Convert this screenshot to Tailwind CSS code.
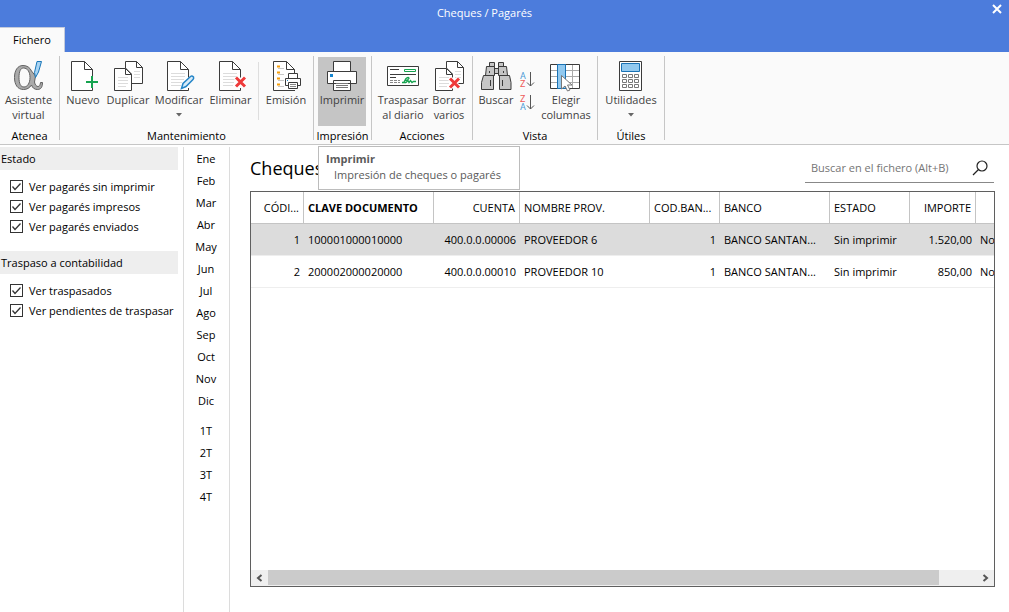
<!DOCTYPE html>
<html lang="es">
<head>
<meta charset="utf-8">
<title>Cheques / Pagarés</title>
<script src="https://cdn.jsdelivr.net/npm/@tailwindcss/browser@4"></script>
</head>
<body class="flex min-h-screen flex-col bg-white font-['Open_Sans','Noto_Sans',sans-serif] text-[11px] leading-[15px] text-black">

<svg class="hidden" aria-hidden="true">
  <defs>
    <g id="page" fill="none" stroke="#3b3b3b">
      <path fill="#fff" stroke="none" d="M4.500 1.500H17.500L25.500 9.500V30.500H4.500Z"/>
      <path d="M25.500 17.500V9.500L17.500 1.500H4.500V30.500H25.500V28M17.500 1.500V9.500H25.500"/>
    </g>
    <path id="lines" fill="none" stroke="#dcdcdc" d="M8 13.500H22M8 16.500H22M8 19.500H21M8 22.500H19M8 25.500H18"/>
    <g id="pages" fill="#fff" stroke="#3b3b3b">
      <path d="M13.500 8V1.500H24.500L30.500 7.500V23.500H19.500V14Z"/>
      <path fill="none" d="M24.500 1.500V7.500H30.500"/>
      <path stroke="#dcdcdc" d="M22 11.500H28M22 14.500H28M22 17.500H28"/>
      <path d="M2.500 8.500H13.500L19.500 14.500V30.500H2.500Z"/>
      <path fill="none" d="M13.500 8.500V14.500H19.500"/>
      <path stroke="#dcdcdc" d="M6 17.500H16M6 20.500H16M6 23.500H16M6 26.500H14"/>
    </g>
  </defs>
</svg>

<header class="bg-[#4c7cdc]">
  <div class="relative flex h-[27px] items-center justify-center pb-0.5 text-white">
    <h1 class="-translate-x-5">Cheques / Pagarés</h1>
    <button aria-label="Cerrar" class="absolute top-1 right-[7px] h-[10px] w-[10px]">
      <svg class="size-[10px]" viewBox="0 0 10 10" stroke="#fff" stroke-width="2"><path d="M1 1L9 9M9 1L1 9"/></svg>
    </button>
  </div>
  <button class="block h-[25px] w-[65px] border-t border-r border-[#c4cbdc] bg-[#fafafa] pb-0.5">Fichero</button>
</header>

<nav aria-label="Fichero" class="flex h-[93px] border-b border-[#c6c6c6] bg-[#fafafa] pt-1 whitespace-nowrap text-[#3f3f3f]">
  <section class="flex h-[84px] w-[60px] flex-col items-center justify-between border-r border-[#c6c6c6]">
    <button class="mr-0.5 flex w-[52px] flex-col items-center pt-1">
      <svg class="size-8" viewBox="0 0 32 32">
        <path d="M10 5.500C14 5.500 17 7.500 18.500 11L22.500 16L21.500 22C22 25 23.500 26.500 25 26.500C26.500 26.500 27.200 25 27.500 22.500H29.500C29.500 27 28 29.500 24.500 29.500C21.500 29.500 19.500 28 18.500 25C16.500 28 14 29.500 10.500 29.500C4.500 29.500 1.500 24.500 1.500 17.500C1.500 10.500 4.500 5.500 10 5.500ZM10.500 8C7.500 8 6 11.500 6 17.500C6 23.500 7.500 27 11 27C14.500 27 17 23 17 17.500C17 12 14.500 8 10.500 8Z" fill="#aaa" stroke="#626262" fill-rule="evenodd"/>
        <path d="M24 1.500H28.500L25.500 12L22.500 17.500L21.500 12.500Z" fill="#a9d4f3" stroke="#1976b8"/>
      </svg>
      <span>Asistente</span><span>virtual</span>
    </button>
    <h2 class="-mb-[3px] text-black">Atenea</h2>
  </section>

  <section class="flex h-[84px] w-[254px] flex-col items-center justify-between border-r border-[#c6c6c6]">
    <div class="flex w-full pl-px">
      <button class="flex w-[44px] flex-col items-center pt-1">
        <svg class="size-8" viewBox="0 0 32 32"><use href="#page"/><path d="M25 16V28M19 22H31" stroke="#16a34f" stroke-width="2"/></svg>
        <span>Nuevo</span>
      </button>
      <button class="flex w-[46px] flex-col items-center pt-1">
        <svg class="size-8" viewBox="0 0 32 32"><use href="#pages"/></svg>
        <span>Duplicar</span>
      </button>
      <button class="flex w-[56px] flex-col items-center pt-1">
        <svg class="size-8" viewBox="0 0 32 32"><use href="#page"/><use href="#lines"/><path d="M18.500 28.500L20 23.500L27.500 16.500Q29 15.500 30.500 17Q31 18.500 30 19.500L23 26.500Z" fill="#d8ebf8" stroke="#2485c7" stroke-width="1.500"/></svg>
        <span>Modificar</span>
        <svg class="mt-[6px] h-[4px] w-[6px]" viewBox="0 0 6 4"><path d="M0 0H6L3 3.500Z" fill="#666"/></svg>
      </button>
      <button class="flex w-[47px] flex-col items-center pt-1">
        <svg class="size-8" viewBox="0 0 32 32"><use href="#page"/><use href="#lines"/><path d="M21 17.500L30 26.500M30 17.500L21 26.500" stroke="#fff" stroke-width="5"/><path d="M21 17.500L30 26.500M30 17.500L21 26.500" stroke="#ee3a3a" stroke-width="3"/></svg>
        <span>Eliminar</span>
      </button>
      <div class="mx-1 mt-1.5 h-[58px] w-px bg-[#dedede]"></div>
      <button class="flex w-[46px] flex-col items-center pt-1">
        <svg class="size-8" viewBox="0 0 32 32">
          <path d="M3.500 1.500H16.500L24.500 9.500V30.500H3.500Z" fill="#fff"/>
          <path d="M24.500 13V9.500L16.500 1.500H3.500V30.500H25M16.500 1.500V9.500H24.500" fill="none" stroke="#3b3b3b"/>
          <path d="M7 6.500H10M7 12.500H10M7 18.500H10M7 24.500H10" stroke="#f59e0b" stroke-width="2"/>
          <path d="M8 8.500H14M8 14.500H14M8 20.500H14M8 26.500H14" stroke="#c8c8c8"/>
          <path d="M18.500 18.500V13.500H27.500V18.500M15.500 18.500H30.500V25.500H15.500Z" fill="#fff" stroke="#3b3b3b"/>
          <path d="M18.500 22.500H27.500V28.500H18.500Z" fill="#fff" stroke="#3b3b3b"/>
          <path d="M20 24.500H26M20 26.500H26" stroke="#888"/><path d="M17 20.500H18" stroke="#2485c7"/>
        </svg>
        <span>Emisión</span>
      </button>
    </div>
    <h2 class="-mb-[3px] text-black">Mantenimiento</h2>
  </section>

  <section class="relative flex h-[84px] w-[58px] flex-col items-center justify-between border-r border-[#c6c6c6]">
    <button aria-describedby="tip" class="mt-px mr-px flex h-[69px] w-12 flex-col items-center bg-[#c5c5c5] pt-[3px]">
      <svg class="size-8" viewBox="0 0 32 32" fill="#fff" stroke="#3b3b3b">
        <path d="M7.500 1.500H24.500V11.500H7.500ZM1.500 11.500H30.500V23.500H1.500ZM7.500 20.500H24.500V30.500H7.500Z"/>
        <path d="M10 23.500H22M10 25.500H22M10 27.500H22" stroke="#777"/><path d="M4 14H7V17H4Z" fill="#1685cf" stroke="none"/>
      </svg>
      <span>Imprimir</span>
    </button>
    <h2 class="-mb-[3px] text-black">Impresión</h2>
    <div id="tip" role="tooltip" class="absolute top-[90px] left-1 z-10 h-[44px] w-[202px] border border-[#bcbcbc] bg-white px-[7px] pt-1 text-[#5a5a5a]">
      <div class="font-bold">Imprimir</div>
      <div class="mt-px pl-2">Impresión de cheques o pagarés</div>
    </div>
  </section>

  <section class="flex h-[84px] w-[101px] flex-col items-center justify-between border-r border-[#c6c6c6]">
    <div class="flex w-full pl-1">
      <button class="flex w-[54px] flex-col items-center pt-1">
        <svg class="size-8" viewBox="0 0 32 32" fill="none" stroke="#3b3b3b">
          <path d="M.5 6.500H31.500V25.500H.5Z" fill="#fff"/>
          <path d="M3 9.500H12M3 14.500H29M3 17.500H9" /><path d="M3 20.500H13M3 22.500H13" stroke="#888" stroke-dasharray="3 1"/>
          <path d="M17.500 9.500H28.500V11.500H17.500Z" stroke="#16a34f"/>
          <path d="M15 22.500H19M17 22L19 18.500Q22 16.500 22 18.500Q21 20.500 18 20.500M19 22.500L21 20.500L22 22.500L23.500 20.500L25 22.500L26.500 21.500H29" stroke="#16a34f" stroke-width="1.300"/>
        </svg>
        <span>Traspasar</span><span>al diario</span>
      </button>
      <button class="flex w-[38px] flex-col items-center pt-1">
        <svg class="size-8" viewBox="0 0 32 32"><use href="#pages"/><path d="M17 18.500L26 27.500M26 18.500L17 27.500" stroke="#fff" stroke-width="5"/><path d="M17 18.500L26 27.500M26 18.500L17 27.500" stroke="#ee3a3a" stroke-width="3"/></svg>
        <span>Borrar</span><span>varios</span>
      </button>
    </div>
    <h2 class="-mb-[3px] text-black">Acciones</h2>
  </section>

  <section class="flex h-[84px] w-[125px] flex-col items-center justify-between border-r border-[#c6c6c6]">
    <div class="flex w-full pl-1">
      <button class="flex w-[38px] flex-col items-center pt-1">
        <svg class="size-8" viewBox="0 0 32 32" fill="#c6c6c6" stroke="#3b3b3b">
          <path d="M9.500 2.500H14.500V6.500H9.500ZM18.500 2.500H23.500V6.500H18.500ZM14.500 8.500H18.500V13.500H14.500ZM6.500 6.500H14.500V15.500H5.500ZM18.500 6.500H26.500L27.500 15.500H18.500ZM3.500 15.500H13.500V29.500H1.500V22.500ZM19.500 15.500H29.500L31 22.500V29.500H19.500Z"/>
          <path d="M10.500 20V26M22.500 20V26M9.500 11V13M23.500 11V13"/>
        </svg>
        <span>Buscar</span>
      </button>
      <div class="flex w-6 flex-col items-center gap-[5px] pt-[14px]">
        <button aria-label="Orden ascendente"><svg class="h-[18px] w-[18px] font-['Roboto',sans-serif]" viewBox="0 0 18 18"><text x="2" y="9" font-size="9" fill="#4b9bd6">A</text><text x="2" y="17" font-size="9" fill="#ee5c5c">Z</text><path d="M12.500 2V16M9 12.500L12.500 16L16 12.500" fill="none" stroke="#555"/></svg></button>
        <button aria-label="Orden descendente"><svg class="h-[18px] w-[18px] font-['Roboto',sans-serif]" viewBox="0 0 18 18"><text x="2" y="9" font-size="9" fill="#ee5c5c">Z</text><text x="2" y="17" font-size="9" fill="#4b9bd6">A</text><path d="M12.500 2V16M9 12.500L12.500 16L16 12.500" fill="none" stroke="#555"/></svg></button>
      </div>
      <button class="flex w-[54px] flex-col items-center pt-1">
        <svg class="size-8" viewBox="0 0 32 32" fill="none">
          <path d="M.5 4.500H29.500V28.500H.5Z" fill="#fff"/>
          <path d="M1 10.500H29M1 16.500H29M1 22.500H29M22.500 5V28" stroke="#aaa"/>
          <path d="M.5 4.500H29.500V28.500H.5Z" stroke="#3b3b3b"/>
          <path d="M7.500 4.500H15.500V28.500H7.500Z" fill="#92c9ef" stroke="#1972b5"/>
          <path d="M11.500 15.500V29L15 26L17.500 31L20 30L17.500 25H22Z" fill="#fff" stroke="#777"/>
        </svg>
        <span>Elegir</span><span>columnas</span>
      </button>
    </div>
    <h2 class="-mb-[3px] text-black">Vista</h2>
  </section>

  <section class="flex h-[84px] w-[67px] flex-col items-center justify-between border-r border-[#c6c6c6]">
    <button class="flex w-[56px] flex-col items-center pt-1">
      <svg class="size-8" viewBox="0 0 32 32" fill="#fff" stroke="#3b3b3b">
        <path d="M4.500 1.500H26.500V30.500H4.500Z"/>
        <path d="M6.500 3.500H24.500V11.500H6.500Z" fill="#92c9ef" stroke="#1972b5"/>
        <path d="M7.500 14.500h4v3h-4ZM13.500 14.500h4v3h-4ZM19.500 14.500h4v3h-4ZM7.500 19.500h4v3h-4ZM13.500 19.500h4v3h-4ZM19.500 19.500h4v3h-4ZM7.500 24.500h4v3h-4ZM13.500 24.500h4v3h-4ZM19.500 24.500h4v3h-4Z" stroke="#777"/>
      </svg>
      <span>Utilidades</span>
      <svg class="mt-[6px] h-[4px] w-[6px]" viewBox="0 0 6 4"><path d="M0 0H6L3 3.500Z" fill="#666"/></svg>
    </button>
    <h2 class="-mb-[3px] text-black">Útiles</h2>
  </section>
</nav>

<div class="flex flex-1 pt-0.5">
  <aside class="w-[184px] shrink-0 border-r border-[#dcdcdc] whitespace-nowrap">
    <fieldset class="mr-[5px]">
      <legend class="h-[23px] w-full bg-[#eee] pl-px leading-[23px]">Estado</legend>
      <div class="flex flex-col pt-1.5 pl-[10px]">
        <label class="flex h-5 items-center gap-1.5"><span class="grid"><input type="checkbox" checked class="peer col-start-1 row-start-1 size-[13px] appearance-none border border-[#333] bg-white"><svg class="pointer-events-none invisible col-start-1 row-start-1 size-[13px] peer-checked:visible" viewBox="0 0 13 13"><path d="M2.500 6.500L5 9.500L10.500 3.500" fill="none" stroke="#333" stroke-width="1.300"/></svg></span>Ver pagarés sin imprimir</label>
        <label class="flex h-5 items-center gap-1.5"><span class="grid"><input type="checkbox" checked class="peer col-start-1 row-start-1 size-[13px] appearance-none border border-[#333] bg-white"><svg class="pointer-events-none invisible col-start-1 row-start-1 size-[13px] peer-checked:visible" viewBox="0 0 13 13"><path d="M2.500 6.500L5 9.500L10.500 3.500" fill="none" stroke="#333" stroke-width="1.300"/></svg></span>Ver pagarés impresos</label>
        <label class="flex h-5 items-center gap-1.5"><span class="grid"><input type="checkbox" checked class="peer col-start-1 row-start-1 size-[13px] appearance-none border border-[#333] bg-white"><svg class="pointer-events-none invisible col-start-1 row-start-1 size-[13px] peer-checked:visible" viewBox="0 0 13 13"><path d="M2.500 6.500L5 9.500L10.500 3.500" fill="none" stroke="#333" stroke-width="1.300"/></svg></span>Ver pagarés enviados</label>
      </div>
    </fieldset>
    <fieldset class="mt-[15px] mr-[5px]">
      <legend class="h-[23px] w-full bg-[#eee] pl-px leading-[23px]">Traspaso a contabilidad</legend>
      <div class="flex flex-col pt-1.5 pl-[10px]">
        <label class="flex h-5 items-center gap-1.5"><span class="grid"><input type="checkbox" checked class="peer col-start-1 row-start-1 size-[13px] appearance-none border border-[#333] bg-white"><svg class="pointer-events-none invisible col-start-1 row-start-1 size-[13px] peer-checked:visible" viewBox="0 0 13 13"><path d="M2.500 6.500L5 9.500L10.500 3.500" fill="none" stroke="#333" stroke-width="1.300"/></svg></span>Ver traspasados</label>
        <label class="flex h-5 items-center gap-1.5"><span class="grid"><input type="checkbox" checked class="peer col-start-1 row-start-1 size-[13px] appearance-none border border-[#333] bg-white"><svg class="pointer-events-none invisible col-start-1 row-start-1 size-[13px] peer-checked:visible" viewBox="0 0 13 13"><path d="M2.500 6.500L5 9.500L10.500 3.500" fill="none" stroke="#333" stroke-width="1.300"/></svg></span>Ver pendientes de traspasar</label>
      </div>
    </fieldset>
  </aside>

  <div class="flex w-[46px] shrink-0 flex-col border-r border-[#dcdcdc] pr-px">
    <button class="h-[22px]">Ene</button><button class="h-[22px]">Feb</button><button class="h-[22px]">Mar</button><button class="h-[22px]">Abr</button><button class="h-[22px]">May</button><button class="h-[22px]">Jun</button><button class="h-[22px]">Jul</button><button class="h-[22px]">Ago</button><button class="h-[22px]">Sep</button><button class="h-[22px]">Oct</button><button class="h-[22px]">Nov</button><button class="h-[22px]">Dic</button>
    <button class="mt-2 h-[22px]">1T</button><button class="h-[22px]">2T</button><button class="h-[22px]">3T</button><button class="h-[22px]">4T</button>
  </div>

  <main class="flex min-w-0 flex-1 flex-col pr-[14px] pb-[25px] pl-5">
    <div class="flex h-[44px] items-start justify-between">
      <h2 class="pt-[7px] text-[18px] leading-7">Cheques / Pagarés</h2>
      <div class="mt-[7px] mr-px flex h-[29px] w-[189px] items-center border-b border-[#888] pr-1.5 pb-px pl-1.5">
        <input type="search" aria-label="Buscar en el fichero" placeholder="Buscar en el fichero (Alt+B)" class="min-w-0 flex-1 outline-none placeholder:text-[#757575]">
        <button aria-label="Buscar"><svg class="size-4" viewBox="0 0 16 16" fill="none" stroke="#222" stroke-width="1.200"><circle cx="10" cy="6" r="5"/><path d="M6.500 9.500L1 15"/></svg></button>
      </div>
    </div>

    <div class="flex flex-1 flex-col justify-between border border-[#5f5f5f]">
      <div class="overflow-hidden">
        <table class="w-[805px] table-fixed border-separate border-spacing-0 text-left whitespace-nowrap [&_td]:overflow-hidden [&_td]:border-b [&_td]:border-[#eee] [&_td]:px-1 [&_td]:text-ellipsis [&_th]:overflow-hidden [&_th]:border-r [&_th]:border-b [&_th]:border-[#c4c4c4] [&_th]:px-1 [&_th]:font-normal [&_th]:text-ellipsis">
          <colgroup><col class="w-[53px]"><col class="w-[130px]"><col class="w-[86px]"><col class="w-[130px]"><col class="w-[70px]"><col class="w-[110px]"><col class="w-[80px]"><col class="w-[66px]"><col class="w-[80px]"></colgroup>
          <thead>
            <tr class="h-8"><th class="text-right">CÓDI...</th><th><b>CLAVE DOCUMENTO</b></th><th class="text-right">CUENTA</th><th>NOMBRE PROV.</th><th>COD.BAN...</th><th>BANCO</th><th>ESTADO</th><th class="text-right">IMPORTE</th><th></th></tr>
          </thead>
          <tbody>
            <tr class="h-8 bg-[#dcdcdc]"><td class="text-right">1</td><td>100001000010000</td><td class="text-right">400.0.0.00006</td><td>PROVEEDOR 6</td><td class="text-right">1</td><td>BANCO SANTAN...</td><td>Sin imprimir</td><td class="text-right">1.520,00</td><td>No</td></tr>
            <tr class="h-8"><td class="text-right">2</td><td>200002000020000</td><td class="text-right">400.0.0.00010</td><td>PROVEEDOR 10</td><td class="text-right">1</td><td>BANCO SANTAN...</td><td>Sin imprimir</td><td class="text-right">850,00</td><td>No</td></tr>
          </tbody>
        </table>
      </div>
      <div class="flex h-4 bg-[#efefef] pb-px">
        <button aria-label="Desplazar a la izquierda" class="flex w-[17px] items-center justify-center"><svg class="h-2 w-[7px]" viewBox="0 0 7 8"><path d="M5.500 1L2 4L5.500 7" fill="none" stroke="#555" stroke-width="2"/></svg></button>
        <div class="flex-1"><div class="h-full bg-[#cbcbcb]" style="width:94.600%"></div></div>
        <button aria-label="Desplazar a la derecha" class="flex w-[17px] items-center justify-center"><svg class="h-2 w-[7px]" viewBox="0 0 7 8"><path d="M1.500 1L5 4L1.500 7" fill="none" stroke="#555" stroke-width="2"/></svg></button>
      </div>
    </div>
  </main>
</div>
</body>
</html>
